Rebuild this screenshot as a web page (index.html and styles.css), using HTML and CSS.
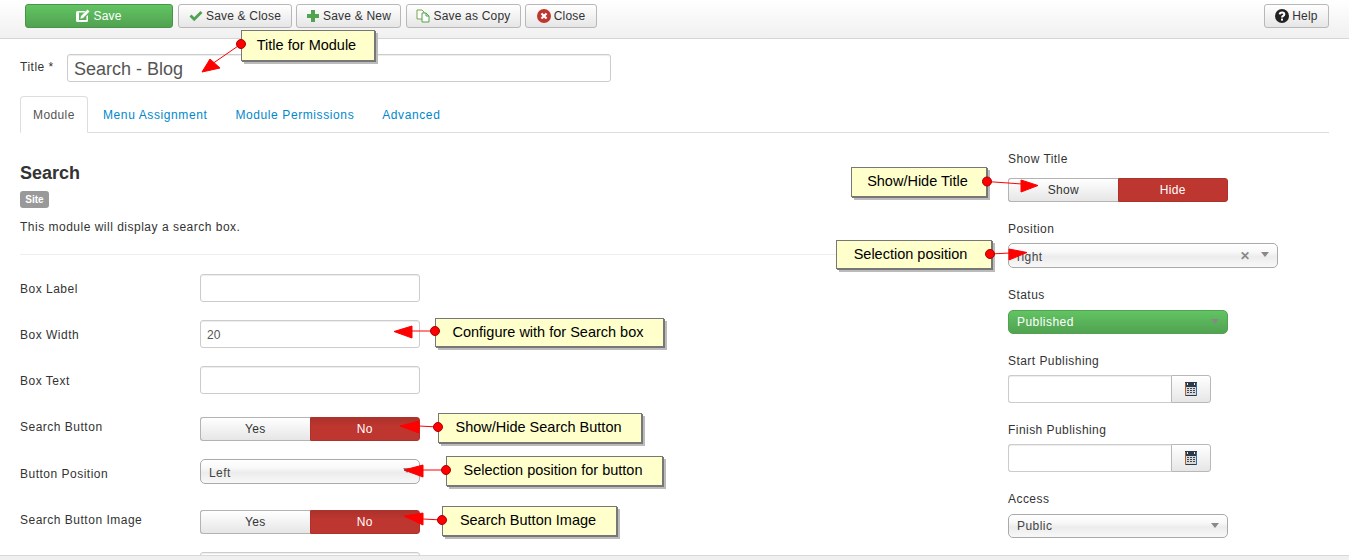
FILE: index.html
```html
<!DOCTYPE html>
<html lang="en">
<head>
<meta charset="utf-8">
<title>Search - Blog</title>
<link rel="stylesheet" href="styles.css">
</head>
<body>
<header class="toolbar">
  <button class="btn btn-save"><svg class="ic" viewBox="0 0 14 14"><path fill="#fff" d="M1.500 2h8l-1.600 1.600H3v7.400h7.400V7.600L12 6v5.500a1.500 1.500 0 0 1-1.500 1.500h-9A1.500 1.500 0 0 1 0 11.500v-8A1.500 1.500 0 0 1 1.500 2zM11.500 0.500l2 2-6.500 6.500-2.700.7.700-2.700z"/></svg>Save</button>
  <button class="btn btn-sc"><svg class="ic" viewBox="0 0 14 14"><path fill="#51a351" d="M0.500 7.500l2-2 2.700 2.700L11.500 2l2 2-8.300 8.300z"/></svg>Save &amp; Close</button>
  <button class="btn btn-sn"><svg class="ic" viewBox="0 0 14 14"><path fill="#51a351" d="M5 1h4v4h4v4H9v4H5V9H1V5h4z"/></svg>Save &amp; New</button>
  <button class="btn btn-cp"><svg class="ic" viewBox="0 0 14 14"><path fill="#fff" stroke="#7aa34a" d="M1 1h5l2 2v7H1z"/><path fill="#fff" stroke="#51a351" d="M6 4h4l3 3v6H6z"/><path fill="none" stroke="#51a351" d="M10 4v3h3"/></svg>Save as Copy</button>
  <button class="btn btn-cl"><svg class="ic" viewBox="0 0 14 14"><circle cx="7" cy="7" r="7" fill="#bd362f"/><path stroke="#fff" stroke-width="2.200" d="M4.500 4.500l5 5M9.500 4.500l-5 5"/></svg>Close</button>
  <button class="btn btn-help"><svg class="ic" viewBox="0 0 14 14"><circle cx="7" cy="7" r="7" fill="#222"/><path fill="none" stroke="#fff" stroke-width="2" d="M4.700 5.400C4.900 3 9.300 3 9.300 5.400c0 1.600-2.300 1.500-2.300 3.100"/><rect x="6" y="9.600" width="2" height="2" fill="#fff"/></svg>Help</button>
</header>

<main class="page">
  <div class="title-row">
    <label class="title-label">Title *</label>
    <input class="title-input" type="text" value="Search - Blog">
  </div>

  <nav class="tabs">
    <a class="tab tab-on">Module</a>
    <a class="tab">Menu Assignment</a>
    <a class="tab">Module Permissions</a>
    <a class="tab">Advanced</a>
  </nav>

  <div class="content">
    <section class="left">
      <h2 class="heading">Search</h2>
      <span class="badge">Site</span>
      <p class="desc">This module will display a search box.</p>
      <hr class="rule">

      <div class="row"><label class="lbl">Box Label</label><input class="field" type="text"></div>
      <div class="row"><label class="lbl">Box Width</label><input class="field" type="text" value="20"></div>
      <div class="row"><label class="lbl">Box Text</label><input class="field" type="text"></div>
      <div class="row"><label class="lbl">Search Button</label><div class="toggle toggle-in-row"><span class="opt">Yes</span><span class="opt opt-red">No</span></div></div>
      <div class="row"><label class="lbl">Button Position</label><div class="select"><span>Left</span><i class="caret"></i></div></div>
      <div class="row"><label class="lbl">Search Button Image</label><div class="toggle toggle-in-row"><span class="opt">Yes</span><span class="opt opt-red">No</span></div></div>
      <div class="row"><label class="lbl"></label><input class="field" type="text"></div>
    </section>

    <aside class="right">
      <div class="group"><label class="rlbl">Show Title</label><div class="toggle toggle-side"><span class="opt">Show</span><span class="opt opt-red">Hide</span></div></div>
      <div class="group"><label class="rlbl">Position</label><div class="select select-wide"><span>right</span><b class="clear">✕</b><i class="caret"></i></div></div>
      <div class="group"><label class="rlbl">Status</label><div class="select select-green select-drop"><span>Published</span><i class="caret"></i></div></div>
      <div class="group"><label class="rlbl">Start Publishing</label><div class="date"><input class="date-in" type="text"><button class="date-btn"><svg class="cal" viewBox="0 0 14 14"><path fill="#2b3a4a" d="M1 0h12v14H1z"/><path fill="#b0602a" d="M1 1h1v13H1z"/><path fill="#2f6fa8" d="M12 1h1v13h-1z"/><path fill="#eee" d="M3 1h1v2H3zM10 1h1v2h-1z"/><path fill="#d8d8d8" d="M2 5h10v8H2z"/><path fill="#3a4756" d="M3 6h2v1H3zM6 6h2v1H6zM9 6h2v1H9zM3 8h2v1H3zM6 8h2v1H6zM9 8h2v1H9zM3 10h2v1H3zM6 10h2v1H6zM9 10h2v1H9z"/></svg></button></div></div>
      <div class="group"><label class="rlbl">Finish Publishing</label><div class="date"><input class="date-in" type="text"><button class="date-btn"><svg class="cal" viewBox="0 0 14 14"><path fill="#2b3a4a" d="M1 0h12v14H1z"/><path fill="#b0602a" d="M1 1h1v13H1z"/><path fill="#2f6fa8" d="M12 1h1v13h-1z"/><path fill="#eee" d="M3 1h1v2H3zM10 1h1v2h-1z"/><path fill="#d8d8d8" d="M2 5h10v8H2z"/><path fill="#3a4756" d="M3 6h2v1H3zM6 6h2v1H6zM9 6h2v1H9zM3 8h2v1H3zM6 8h2v1H6zM9 8h2v1H9zM3 10h2v1H3zM6 10h2v1H6zM9 10h2v1H9z"/></svg></button></div></div>
      <div class="group"><label class="rlbl">Access</label><div class="select select-drop"><span>Public</span><i class="caret"></i></div></div>
    </aside>
  </div>
</main>

<footer class="statusbar"></footer>

<svg class="arrows" viewBox="0 0 1349 560" width="1349" height="560">
  <g fill="#f00" stroke="#f00">
    <line x1="241" y1="44" x2="212" y2="64"/><polygon points="202,72 210,59 220,68"/>
    <line x1="987" y1="181.500" x2="1022" y2="184"/><polygon points="1038,185.500 1021,180 1021,192"/>
    <line x1="990" y1="254" x2="1010" y2="253"/><polygon points="1027,252.500 1009,249 1009,260"/>
    <line x1="435" y1="331" x2="412" y2="331"/><polygon points="394,331.500 412,326 412,338"/>
    <line x1="438" y1="427" x2="419" y2="426"/><polygon points="400,426 419,421 419,433"/>
    <line x1="446" y1="470" x2="423" y2="470"/><polygon points="404,470 423,465 423,477"/>
    <line x1="442" y1="520" x2="423" y2="519"/><polygon points="404,516 423,513 423,525"/>
  </g>
  <g fill="#f00" stroke="#a00">
    <circle cx="241" cy="44" r="4.500"/><circle cx="987" cy="181.500" r="4.500"/><circle cx="990" cy="254" r="4.500"/><circle cx="435" cy="331" r="4.500"/><circle cx="438" cy="427" r="4.500"/><circle cx="446" cy="470" r="4.500"/><circle cx="442" cy="520" r="4.500"/>
  </g>
</svg>

<div class="note n-title">Title for Module</div>
<div class="note n-show">Show/Hide Title</div>
<div class="note n-pos">Selection position</div>
<div class="note n-width">Configure with for Search box</div>
<div class="note n-btn">Show/Hide Search Button</div>
<div class="note n-btnpos">Selection position for button</div>
<div class="note n-img">Search Button Image</div>
</body>
</html>
```

FILE: styles.css
```css
* { box-sizing: border-box; }
html, body { margin: 0; height: 560px; overflow: hidden; }
body { position: relative; background: #fff; color: #333; font: 12px/18px "Liberation Sans", Arial, sans-serif; }

.toolbar { height: 39px; display: flex; align-items: flex-start; gap: 4px; padding: 4px 20px 0 25px; background: linear-gradient(#ffffff, #f0f0f0); border-bottom: 1px solid #d6d6d6; }
.btn { height: 24px; display: flex; align-items: center; justify-content: center; gap: 3px; padding: 0; border: 1px solid #b8b8b8; border-radius: 3px; background: linear-gradient(#ffffff, #e6e6e6); color: #333; font: 12px "Liberation Sans", Arial, sans-serif; letter-spacing: .2px; }
.ic { width: 14px; height: 14px; flex: none; }
.btn-save { width: 148px; background: linear-gradient(#62c462, #51a351); border-color: #4a944a; color: #fff; }
.btn-sc { width: 114px; margin-left: 1px; }
.btn-sn { width: 105px; }
.btn-cp { width: 115px; margin-left: 1px; }
.btn-cl { width: 72px; }
.btn-help { width: 65px; margin-left: auto; }

.page { height: 521px; padding: 0 20px; overflow: hidden; }
.title-row { display: flex; align-items: flex-start; padding-top: 15px; }
.title-label { width: 47px; padding-top: 4px; letter-spacing: .5px; }
.title-input { width: 544px; height: 28px; padding: 5px 6px 2px; border: 1px solid #ccc; border-radius: 3px; color: #555; font: 18px "Liberation Sans", Arial, sans-serif; box-shadow: inset 0 1px 1px rgba(0,0,0,.075); }

.tabs { display: flex; height: 37px; margin-top: 14px; border-bottom: 1px solid #ddd; }
.tab { height: 37px; padding: 9px 12px; margin-right: 2px; color: #0088cc; border: 1px solid transparent; letter-spacing: .6px; }
.tab-on { width: 68px; margin-right: 2px; color: #555; background: #fff; border-color: #ddd #ddd #fff; border-radius: 4px 4px 0 0; letter-spacing: .4px; }

.content { display: flex; }
.left { width: 969px; padding-top: 28px; }
.right { width: 321px; margin-left: 19px; padding-top: 17px; }
.heading { height: 24px; margin: 0; color: #333; font-size: 18px; font-weight: bold; line-height: 24px; }
.badge { display: block; width: 29px; height: 17px; margin-top: 6px; background: #999; border-radius: 3px; color: #fff; font-size: 10px; font-weight: bold; line-height: 17px; text-align: center; }
.desc { margin: 10px 0 0; letter-spacing: .5px; }
.rule { height: 1px; margin: 18px 0 19px; border: 0; background: #eee; }

.row { display: flex; align-items: flex-start; min-height: 28px; margin-bottom: 18px; }
.lbl { width: 180px; padding-top: 6px; letter-spacing: .5px; }
.field { width: 220px; height: 28px; padding: 2px 6px 0; border: 1px solid #ccc; border-radius: 3px; color: #555; font: 12px "Liberation Sans", Arial, sans-serif; box-shadow: inset 0 1px 1px rgba(0,0,0,.075); }

.toggle { display: flex; width: 220px; height: 24px; letter-spacing: .3px; }
.toggle-in-row { margin-top: 5px; }
.toggle-in-row .opt-red { background: linear-gradient(#ac322c, #bd362f 35%); }
.opt { flex: 1; display: flex; align-items: center; justify-content: center; border: 1px solid #b3b3b3; border-right: 0; border-radius: 3px 0 0 3px; background: linear-gradient(#ffffff, #e6e6e6); }
.opt-red { border: 1px solid #ac322c; border-radius: 0 3px 3px 0; background: #bd362f; color: #fff; }

.select { position: relative; display: flex; align-items: center; width: 220px; height: 25px; padding: 2px 8px 0; border: 1px solid #aaa; border-radius: 5px; background: linear-gradient(#fff 0%, #f8f8f8 35%, #ececec 55%, #f8f8f8 100%); color: #444; letter-spacing: .45px; }
.select-wide { width: 270px; }
.select-green { background: linear-gradient(#62c462, #51a351); border-color: #51a351; color: #fff; }
.select-drop { height: 24px; margin-top: 6px; padding-top: 0; }
.caret { position: absolute; right: 8px; top: 8px; width: 0; height: 0; border: 4px solid transparent; border-top: 5px solid #888; border-bottom: 0; }
.clear { position: absolute; right: 27px; top: 3px; color: #888; font-size: 12px; font-weight: bold; }

.group { margin-bottom: 18px; }
.rlbl { display: block; padding-top: 1px; margin-bottom: 4px; line-height: 17px; letter-spacing: .45px; }
.rlbl + .select-drop { margin-top: 6px; }
.toggle-side { margin-top: 10px; }
.date { display: flex; width: 203px; height: 28px; margin-top: 5px; }
.date-in { width: 163px; height: 28px; border: 1px solid #ccc; border-right: 0; border-radius: 3px 0 0 3px; box-shadow: inset 0 1px 1px rgba(0,0,0,.075); }
.date-btn { width: 40px; height: 28px; display: flex; align-items: center; justify-content: center; padding: 0; border: 1px solid #b8b8b8; border-radius: 0 3px 3px 0; background: linear-gradient(#ffffff, #e6e6e6); }
.cal { width: 14px; height: 14px; }
.select-wide { margin-top: 5px; }

.statusbar { position: absolute; left: 0; right: 0; top: 555px; height: 5px; background: #f0f0f0; border-top: 1px solid #d8d8d8; }

.arrows { position: absolute; left: 0; top: 0; z-index: 2; }
.note { position: absolute; z-index: 1; display: flex; align-items: center; justify-content: center; padding: 0 3px 2px 0; background: #ffffcc; border: 1px solid #777; box-shadow: 1px 1px 0 #777, 3px 3px 0 #bbb; color: #000; font-size: 14.500px; }
.n-title { left: 241px; top: 30px; width: 134px; height: 31px; }
.n-show { left: 851px; top: 167px; width: 136px; height: 30px; }
.n-pos { left: 836px; top: 240px; width: 156px; height: 29px; padding-right: 7px; }
.n-width { left: 435px; top: 318px; width: 229px; height: 29px; }
.n-btn { left: 438px; top: 413px; width: 204px; height: 30px; }
.n-btnpos { left: 446px; top: 456px; width: 217px; height: 30px; }
.n-img { left: 442px; top: 506px; width: 175px; height: 30px; }
```
